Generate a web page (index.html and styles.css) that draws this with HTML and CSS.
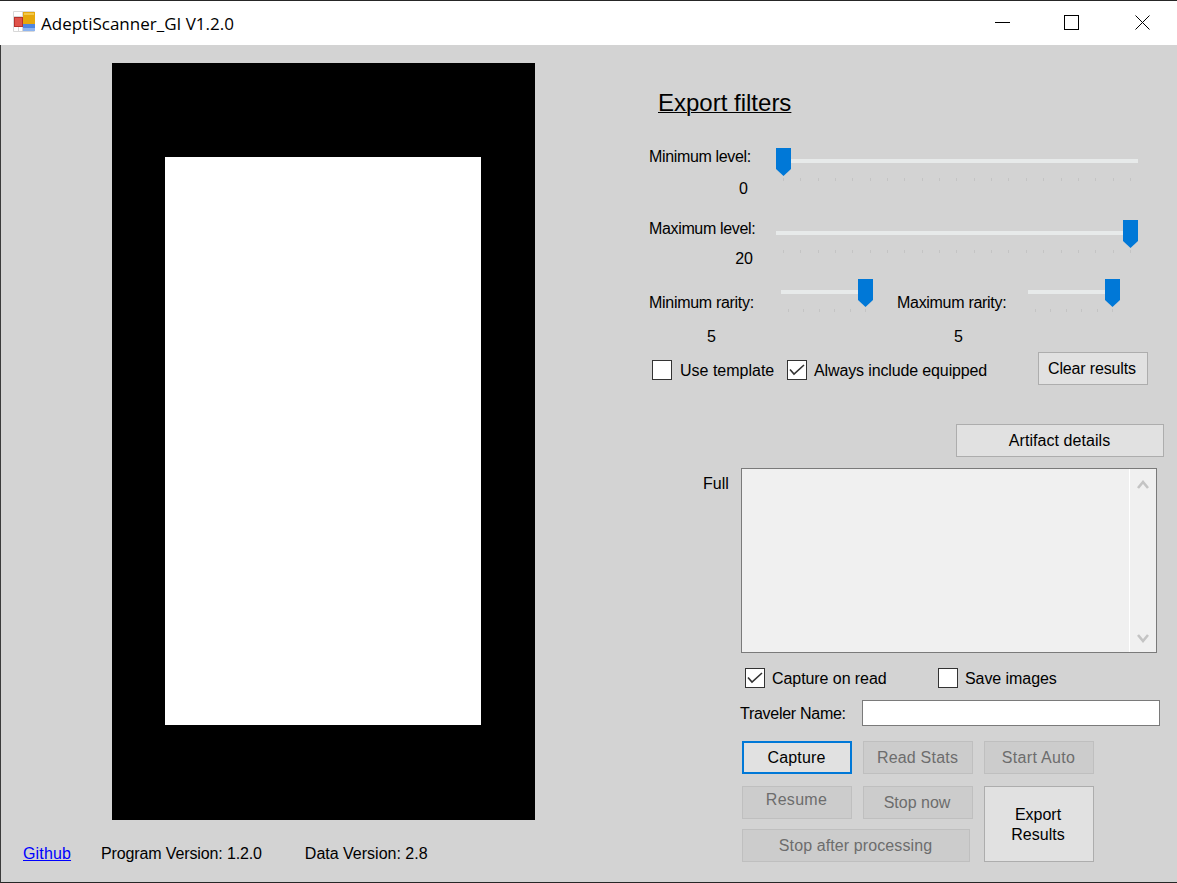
FILE: index.html
```html
<!DOCTYPE html>
<html lang="en">
<head>
<meta charset="utf-8">
<title>AdeptiScanner_GI V1.2.0</title>
<link rel="stylesheet" href="styles.css">
</head>
<body>
<div class="window">
  <header class="titlebar">
    <svg class="app-icon" width="22" height="21" viewBox="0 0 22 21">
      <path d="M.5 .5h21M.5 .5v20M.5 20.5h21M.5 5.5h9M.5 15.5h9M5.5 15.5v5M9.5 .5v20" stroke="#d8d8d8" fill="none"/>
      <rect x="10" y="1" width="12" height="12" fill="#e6a80c"/>
      <rect x="11" y="2" width="10" height="2" fill="#f2c84a"/>
      <rect x="1" y="6" width="9" height="10" fill="#b8322c"/>
      <rect x="2" y="7" width="7" height="8" fill="#e0534a"/>
      <rect x="10" y="13" width="12" height="7" fill="#4f86e0"/>
      <rect x="10" y="17" width="12" height="3" fill="#8db4f0"/>
    </svg>
    <span class="title">AdeptiScanner_GI V1.2.0</span>
    <div class="window-controls">
      <svg class="wc" width="15" height="15" viewBox="0 0 15 15"><path d="M0 7.5h15" stroke="#000" fill="none"/></svg>
      <svg class="wc wc-max" width="15" height="15" viewBox="0 0 15 15"><rect x=".5" y=".5" width="14" height="14" stroke="#000" fill="none"/></svg>
      <svg class="wc" width="15" height="15" viewBox="0 0 15 15"><path d="M.5 .5l14 14M14.5 .5l-14 14" stroke="#000" fill="none"/></svg>
    </div>
  </header>
  <main class="form">
    <section class="preview-col">
      <div class="canvas"><div class="canvas-inner"></div></div>
      <footer class="status">
        <a class="link" href="#">Github</a>
        <span class="prog">Program Version: 1.2.0</span>
        <span class="data">Data Version: 2.8</span>
      </footer>
    </section>
    <section class="panel">
      <h1 class="heading">Export filters</h1>

      <div class="level-row first">
        <div class="level-text">
          <div class="tight">Minimum level:</div>
          <div class="value v-min">0</div>
        </div>
        <div class="slider wide at-start">
          <div class="track"></div>
          <svg class="thumb" width="15" height="28" viewBox="0 0 15 28"><path d="M0 0h15v21l-7.5 7l-7.5-7z" fill="#0078d7"/></svg>
          <div class="ticks"><i></i><i></i><i></i><i></i><i></i><i></i><i></i><i></i><i></i><i></i><i></i><i></i><i></i><i></i><i></i><i></i><i></i><i></i><i></i><i></i><i></i></div>
        </div>
      </div>

      <div class="level-row second">
        <div class="level-text">
          <div class="tight">Maximum level:</div>
          <div class="value v-max">20</div>
        </div>
        <div class="slider wide at-end">
          <div class="track"></div>
          <svg class="thumb" width="15" height="28" viewBox="0 0 15 28"><path d="M0 0h15v21l-7.5 7l-7.5-7z" fill="#0078d7"/></svg>
          <div class="ticks"><i></i><i></i><i></i><i></i><i></i><i></i><i></i><i></i><i></i><i></i><i></i><i></i><i></i><i></i><i></i><i></i><i></i><i></i><i></i><i></i><i></i></div>
        </div>
      </div>

      <div class="rarity-row">
        <div class="rarity r-min">
          <div class="rarity-top">
            <span class="rarity-label">Minimum rarity:</span>
            <div class="slider narrow at-end">
              <div class="track"></div>
              <svg class="thumb" width="15" height="28" viewBox="0 0 15 28"><path d="M0 0h15v21l-7.5 7l-7.5-7z" fill="#0078d7"/></svg>
              <div class="ticks"><i></i><i></i><i></i><i></i><i></i><i></i></div>
            </div>
          </div>
          <div class="rarity-value">5</div>
        </div>
        <div class="rarity r-max">
          <div class="rarity-top">
            <span class="rarity-label">Maximum rarity:</span>
            <div class="slider narrow at-end">
              <div class="track"></div>
              <svg class="thumb" width="15" height="28" viewBox="0 0 15 28"><path d="M0 0h15v21l-7.5 7l-7.5-7z" fill="#0078d7"/></svg>
              <div class="ticks"><i></i><i></i><i></i><i></i><i></i><i></i></div>
            </div>
          </div>
          <div class="rarity-value">5</div>
        </div>
      </div>

      <div class="options-row">
        <label class="check c-template"><span class="box"></span><span class="txt">Use template</span></label>
        <label class="check c-equipped"><span class="box"><svg width="16" height="16" viewBox="0 0 16 16"><path d="M1 7.5l4 4.5l10-9" stroke="#333" stroke-width="1.6" fill="none"/></svg></span><span class="txt">Always include equipped</span></label>
        <button class="btn clear" type="button">Clear results</button>
      </div>

      <button class="btn details" type="button">Artifact details</button>

      <div class="full-row">
        <span class="full-label">Full</span>
        <div class="textarea">
          <div class="scrollbar">
            <svg width="12" height="9" viewBox="0 0 12 9"><path d="M1 8l5-6l5 6" stroke="#c4c4c4" stroke-width="2.6" fill="none"/></svg>
            <svg width="12" height="9" viewBox="0 0 12 9"><path d="M1 1l5 6l5-6" stroke="#c4c4c4" stroke-width="2.6" fill="none"/></svg>
          </div>
        </div>
      </div>

      <div class="capture-row">
        <label class="check c-capture"><span class="box"><svg width="16" height="16" viewBox="0 0 16 16"><path d="M1 7.5l4 4.5l10-9" stroke="#333" stroke-width="1.6" fill="none"/></svg></span><span class="txt">Capture on read</span></label>
        <label class="check c-save"><span class="box"></span><span class="txt">Save images</span></label>
      </div>

      <div class="traveler-row">
        <span class="traveler-label">Traveler Name:</span>
        <div class="input"></div>
      </div>

      <div class="actions">
        <button class="btn focus a-capture" type="button">Capture</button>
        <button class="btn off a-read" type="button">Read Stats</button>
        <button class="btn off a-auto" type="button">Start Auto</button>
        <button class="btn off a-resume" type="button">Resume</button>
        <button class="btn off a-stop" type="button">Stop now</button>
        <button class="btn a-export" type="button">Export<br>Results</button>
        <button class="btn off a-after" type="button">Stop after processing</button>
      </div>
    </section>
  </main>
</div>
</body>
</html>
```
FILE: styles.css
```css
* { box-sizing: border-box; }
html, body { margin: 0; padding: 0; }
body {
  width: 1177px;
  height: 883px;
  overflow: hidden;
  font-family: "Liberation Sans", Arial, sans-serif;
  font-size: 16px;
  line-height: 18px;
  color: #000;
}
.window { width: 1177px; height: 883px; display: flex; flex-direction: column; }

.titlebar {
  height: 45px;
  flex: none;
  background: #fff;
  border-top: 1px solid #262626;
  display: flex;
  align-items: center;
  padding-left: 13px;
}
.app-icon { flex: none; margin-top: -3px; }
.title {
  margin-left: 6px;
  padding-top: 2px;
  font-family: "Open Sans", "Noto Sans", sans-serif;
  font-size: 17px;
  line-height: 24px;
}
.window-controls {
  margin-left: auto;
  display: flex;
  gap: 55px;
  padding-right: 27px;
  margin-top: -1px;
}
.wc { display: block; }
.wc-max { margin-left: -1px; margin-right: 1px; }

.form {
  flex: 1;
  display: flex;
  background: #d3d3d3;
  border-left: 1px solid #3a3a3a;
  border-bottom: 1px solid #262626;
}
.preview-col { width: 639px; flex: none; padding-top: 18px; }
.canvas {
  margin-left: 111px;
  width: 423px;
  height: 757px;
  background: #000;
  padding: 94px 0 0 53px;
}
.canvas-inner { width: 316px; height: 568px; background: #fff; }
.status { display: flex; margin-top: 25px; padding-left: 22px; }
.link { color: #0000ff; text-decoration: underline; letter-spacing: .15px; }
.prog { margin-left: 30px; letter-spacing: -.13px; }
.data { margin-left: 43px; }

.panel { flex: 1; min-width: 0; display: flex; flex-direction: column; align-items: flex-start; }
.heading {
  margin: 45px 0 0 18px;
  font-size: 24px;
  font-weight: 400;
  line-height: 26px;
  text-decoration: underline;
  text-decoration-thickness: 1px;
  height: 26px;
}

.level-row { display: flex; padding-left: 9px; }
.level-row.first { margin-top: 31px; height: 51px; }
.level-row.second { margin-top: 21px; height: 48px; }
.level-text { width: 127px; padding-top: 1px; }
.tight { letter-spacing: -.35px; }
.value { text-align: right; padding-right: 28px; }
.v-min { margin-top: 14px; }
.v-max { margin-top: 12px; padding-right: 23px; }

.slider { position: relative; height: 33px; margin-top: 1px; }
.slider.wide { width: 362px; }
.slider.narrow { width: 92px; }
.track { position: absolute; left: 0; right: 0; top: 11px; height: 4px; background: #e7eaea; }
.thumb { position: absolute; top: 0; display: block; }
.at-start .thumb { left: 0; }
.at-end .thumb { right: 0; }
.ticks {
  position: absolute;
  left: 7px;
  right: 7px;
  top: 30px;
  height: 3px;
  display: flex;
  justify-content: space-between;
}
.ticks i { display: block; width: 1px; height: 3px; background: #c4c4c4; }

.rarity-row { display: flex; margin-top: 12px; padding-left: 9px; height: 66px; }
.rarity { position: relative; }
.r-min { width: 248px; }
.rarity-top { display: flex; align-items: flex-start; }
.rarity-top .slider { margin-top: 0; }
.r-min .rarity-top { width: 224px; justify-content: space-between; }
.r-max .rarity-top { width: 223px; justify-content: space-between; }
.rarity-label { margin-top: 15px; letter-spacing: -.3px; }
.rarity-value { margin-top: 16px; padding-left: 58px; }
.r-max .rarity-value { padding-left: 57px; }

.options-row { display: flex; margin-top: 7px; padding-left: 12px; height: 33px; }
.check { display: flex; align-items: center; height: 20px; }
.txt { padding-top: 2px; }
.box {
  width: 20px;
  height: 20px;
  flex: none;
  margin-right: 8px;
  background: #fff;
  border: 1px solid #333;
  display: flex;
  align-items: center;
  justify-content: center;
}
.box svg { display: block; }
.options-row .check { margin-top: 8px; }
.c-template { width: 135px; }
.c-equipped { width: 251px; letter-spacing: -.13px; }
.c-equipped .box { margin-right: 7px; }

.btn {
  display: block;
  width: 110px;
  height: 33px;
  padding: 0 2px 0 0;
  background: #e1e1e1;
  border: 1px solid #adadad;
  font: inherit;
  color: #000;
  text-align: center;
}
.clear { letter-spacing: -.15px; }
.details { width: 208px; margin: 39px 0 0 316px; padding-right: 1px; letter-spacing: .06px; }
.off { background: #cccccc; border-color: #bfbfbf; color: #6d6d6d; }
.focus { border: 2px solid #0078d7; }

.full-row { display: flex; margin-top: 11px; padding-left: 63px; }
.full-label { width: 38px; margin-top: 7px; }
.textarea {
  width: 416px;
  height: 185px;
  background: #f0f0f0;
  border: 1px solid #7a7a7a;
  display: flex;
  justify-content: flex-end;
}
.scrollbar {
  width: 27px;
  border-left: 1px solid #fff;
  display: flex;
  flex-direction: column;
  align-items: center;
  justify-content: space-between;
  padding: 11px 0 9px;
}
.scrollbar svg { display: block; }

.capture-row { display: flex; margin-top: 15px; padding-left: 105px; letter-spacing: -.07px; }
.c-capture { width: 193px; }
.c-capture .box, .c-save .box { margin-right: 7px; }

.traveler-row { display: flex; align-items: center; margin-top: 12px; padding-left: 100px; }
.traveler-label { width: 122px; padding-top: 2px; letter-spacing: -.28px; }
.input { width: 298px; height: 26px; background: #fff; border: 1px solid #7a7a7a; }

.actions {
  display: grid;
  grid-template-columns: 110px 110px 110px;
  grid-template-rows: 33px 12px 33px 10px 33px;
  column-gap: 11px;
  margin: 15px 0 0 102px;
}
.a-capture { grid-area: 1 / 1; padding-right: 1px; letter-spacing: .15px; }
.a-read { grid-area: 1 / 2; padding-right: 1px; letter-spacing: .2px; }
.a-auto { grid-area: 1 / 3; padding-right: 1px; letter-spacing: .3px; }
.a-resume { grid-area: 3 / 1; padding-right: 1px; padding-bottom: 5px; letter-spacing: .3px; }
.a-stop { grid-area: 3 / 2; }
.a-export { grid-area: 3 / 3 / 6 / 4; height: 76px; line-height: 20px; padding-top: 2px; }
.a-after { grid-area: 5 / 1 / 6 / 3; width: 228px; padding-right: 1px; letter-spacing: .1px; }
```
